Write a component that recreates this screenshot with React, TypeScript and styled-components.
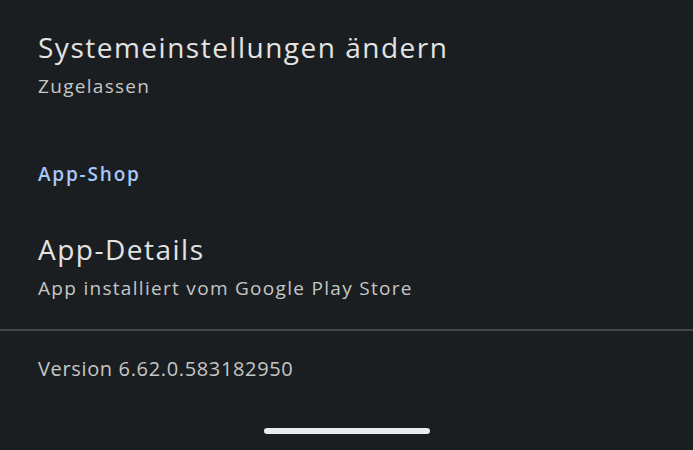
import styled, { createGlobalStyle } from 'styled-components';

const GlobalStyle = createGlobalStyle`
  html, body {
    margin: 0;
    padding: 0;
    background: #1b1e21;
  }
  body {
    font-family: 'Open Sans', 'Roboto', sans-serif;
  }
`;

const Screen = styled.div`
  width: 693px;
  height: 450px;
  background: #1b1e21;
  display: flex;
  flex-direction: column;
  overflow: hidden;
`;

const Item = styled.div`
  display: flex;
  flex-direction: column;
  padding: 0 38px;
`;

const Title = styled.div`
  color: #e3e3e3;
  font-size: 28px;
  line-height: 32px;
  letter-spacing: 1.5px;
  white-space: nowrap;
`;

const Summary = styled.div`
  color: #c4c7c5;
  font-size: 19px;
  line-height: 24px;
  letter-spacing: 1.3px;
  margin-top: 11px;
  white-space: nowrap;
`;

const Category = styled.div`
  color: #a8c7fa;
  font-size: 19px;
  font-weight: 600;
  line-height: 24px;
  letter-spacing: 1.8px;
  padding: 0 38px;
`;

const Divider = styled.div`
  height: 2px;
  background: #444649;
`;

const Footer = styled.div`
  color: #c4c7c5;
  font-size: 20px;
  line-height: 24px;
  letter-spacing: 0.65px;
  padding: 0 38px;
`;

const HomeBar = styled.div`
  align-self: center;
  width: 166px;
  height: 6px;
  border-radius: 3px;
  background: #ececec;
  margin-top: auto;
  margin-bottom: 16px;
`;

const Spacer = styled.div<{ h: number }>`
  height: ${(p) => p.h}px;
  flex-shrink: 0;
`;

export default function App() {
  return (
    <>
      <GlobalStyle />
      <Screen>
        <Spacer h={31} />
        <Item>
          <Title>Systemeinstellungen ändern</Title>
          <Summary>Zugelassen</Summary>
        </Item>
        <Spacer h={64} />
        <Category>App-Shop</Category>
        <Spacer h={47} />
        <Item>
          <Title>App-Details</Title>
          <Summary>App installiert vom Google Play Store</Summary>
        </Item>
        <Spacer h={29} />
        <Divider />
        <Spacer h={26} />
        <Footer>Version 6.62.0.583182950</Footer>
        <HomeBar />
      </Screen>
    </>
  );
}
